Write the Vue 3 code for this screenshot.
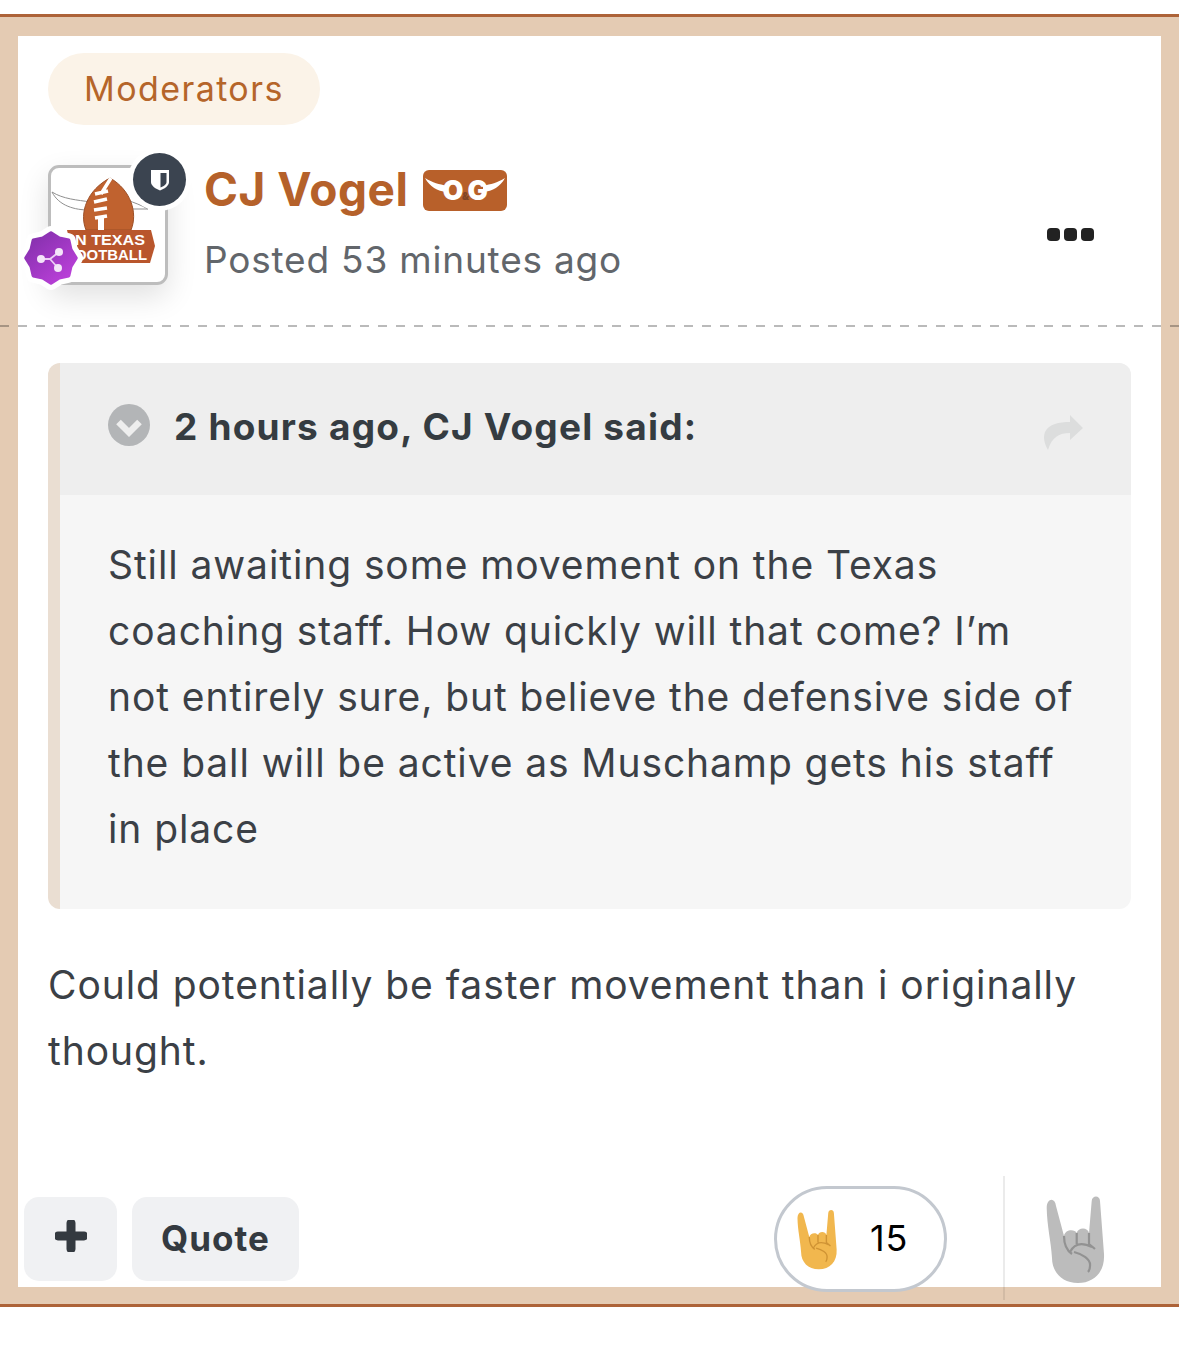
<script setup>
function star(cx, cy, outer, inner, n) {
  const pts = []
  for (let i = 0; i < n * 2; i++) {
    const a = (i * Math.PI) / n - Math.PI / 2
    const r = i % 2 === 0 ? outer : inner
    pts.push(`${(cx + r * Math.cos(a)).toFixed(2)},${(cy + r * Math.sin(a)).toFixed(2)}`)
  }
  return pts.join(' ')
}
const badgePoints = star(27, 27, 25, 21.5, 8)
const handOutline = 'M0.7 12C0.7 2 9 1 10 10L18 40C19 33 29 33 30.7 37C32 31 42 31 43 37L45.7 5C46-1 54-1 54 5L58 58C59 76 48 87 32 87C16 87 6 76 6 62C5 45 1 30 0.7 12Z'
const handLines = 'M18 40C18 48 20 54 26 58M30.7 37V48M43 37V48L49 53M24 56C29 46 38 47 46 51M28 56C36 58 45 63 44 70C44 73 43 75 42 76'
</script>

<template>
  <div class="frame">
    <article class="card">
      <div class="group-pill">Moderators</div>

      <header class="author">
        <div class="avatar-wrap">
          <div class="avatar">
            <svg class="logo" viewBox="0 0 114 114" width="114" height="114">
              <path d="M1 24C12 31 26 32 40 34L38 42C24 42 8 38 1 24Z" fill="#fff" stroke="#8f8f8f" stroke-width="1" />
              <path d="M76 32C84 35 90 37 97 41L76 41Z" fill="#fff" stroke="#8f8f8f" stroke-width="1" />
              <path d="M59 10C80 22 87 45 80 62L35 62C28 45 36 22 59 10Z" fill="#c0622f" stroke="#9c4f27" stroke-width="1" />
              <path d="M60 10L50 26M44 26L57 23M43 34L56 31M43 42L56 40M44 50L56 48" stroke="#fff" stroke-width="3.500" fill="none" />
              <path d="M47 50H53V62H47Z" fill="#fff" />
              <path d="M16 62H100L104 78L99 95H30L22 88Z" fill="#b9562c" />
              <text x="24" y="76.500" textLength="70" lengthAdjust="spacingAndGlyphs" class="logo-text">N TEXAS</text>
              <text x="24" y="92" textLength="72" lengthAdjust="spacingAndGlyphs" class="logo-text">OOTBALL</text>
            </svg>
          </div>
          <span class="shield-badge">
            <svg viewBox="0 0 20 22" width="20" height="22">
              <path d="M1 1H19V13C19 17 14 20 10 21.500C6 20 1 17 1 13Z" fill="#fff" />
              <path d="M10.500 4H16.500V13C16.500 15.500 13.500 17.500 10.500 18.500Z" fill="#3b4450" />
            </svg>
          </span>
          <span class="share-badge">
            <svg viewBox="0 0 54 54" width="54" height="54">
              <defs>
                <linearGradient id="purple" gradientUnits="userSpaceOnUse" x1="8" y1="4" x2="46" y2="50">
                  <stop offset="0" stop-color="#8530ad" />
                  <stop offset="1" stop-color="#bd41db" />
                </linearGradient>
              </defs>
              <polygon :points="badgePoints" fill="#fff" stroke="#fff" stroke-width="14" stroke-linejoin="round" />
              <polygon :points="badgePoints" fill="url(#purple)" stroke="url(#purple)" stroke-width="3.500" stroke-linejoin="round" />
              <path d="M35 21L26 28L17 28M26 28L34 37" stroke="#eccdf5" stroke-width="1.800" fill="none" />
              <circle cx="35" cy="21" r="4" fill="#f4e4f9" />
              <circle cx="17" cy="28" r="4" fill="#f4e4f9" />
              <circle cx="34" cy="37" r="4" fill="#f4e4f9" />
            </svg>
          </span>
        </div>

        <div class="meta">
          <div class="name-row">
            <h3 class="name">CJ Vogel</h3>
            <span class="og-badge">
              <svg class="og-horns" viewBox="0 0 84 41" width="84" height="41">
                <path d="M2 8C10 13 16 14 24 16L24 22C14 21 7 17 2 8Z" fill="#fff" />
                <path d="M82 8C74 13 68 14 60 16L60 22C70 21 77 17 82 8Z" fill="#fff" />
              </svg>
              <span class="og-text">O<small>&amp;</small>G</span>
            </span>
          </div>
          <div class="posted">Posted 53 minutes ago</div>
        </div>

        <div class="more"><i></i><i></i><i></i></div>
      </header>

      <div class="dash"></div>

      <blockquote class="quote">
        <div class="quote-head">
          <svg class="chevron" viewBox="0 0 42 42" width="42" height="42">
            <circle cx="21" cy="21" r="21" fill="#b3b5b7" />
            <path d="M10.500 18L21 28.500L31.500 18" fill="none" stroke="#eeeeee" stroke-width="6.500" />
          </svg>
          <span class="quote-title">2 hours ago, CJ Vogel said:</span>
          <svg class="reply" viewBox="0 0 40 35" width="40" height="35">
            <path d="M27 0L40 13L27 25V18C16 18 9 22 5 35C1 28 0 22 2 17C6 9 16 7 27 7Z" fill="#dcdddd" />
          </svg>
        </div>
        <p class="quote-body">Still awaiting some movement on the Texas coaching staff. How quickly will that come? I’m not entirely sure, but believe the defensive side of the ball will be active as Muschamp gets his staff in place</p>
      </blockquote>

      <p class="post-text">Could potentially be faster movement than i originally thought.</p>

      <footer class="actions">
        <button class="btn btn-plus" type="button">
          <svg viewBox="0 0 32 32" width="32" height="32">
            <path d="M16 3V29M3 16H29" stroke="#343a40" stroke-width="9" stroke-linecap="round" fill="none" />
          </svg>
        </button>
        <button class="btn btn-quote" type="button">Quote</button>

        <div class="reaction">
          <svg class="hand-small" viewBox="0 -1 60 89" width="41" height="61">
            <path :d="handOutline" fill="#f1b74e" />
            <path :d="handLines" fill="none" stroke="#cf9334" stroke-width="2" />
          </svg>
          <span class="count">15</span>
        </div>

        <span class="divider"></span>

        <svg class="hand-large" viewBox="0 -1 60 89" width="60" height="89">
          <path :d="handOutline" fill="#bcbcbc" />
          <path :d="handLines" fill="none" stroke="#929292" stroke-width="2.200" />
        </svg>
      </footer>
    </article>
  </div>
</template>

<style scoped>
.frame {
  margin-top: 14px;
  border-top: 3px solid #ad6338;
  border-bottom: 3px solid #ad6338;
  background: #e4cbb3;
  padding: 19px 18px 17px;
  font-family: Inter, "Noto Sans", sans-serif;
}
.card {
  background: #fff;
  padding: 17px 30px 0;
  height: 1251px;
  box-sizing: border-box;
}
.group-pill {
  display: inline-block;
  height: 72px;
  line-height: 72px;
  padding: 0 36px 0 36px;
  border-radius: 36px;
  background: #fbf3e8;
  color: #b5652a;
  font-size: 34px;
  letter-spacing: 1.420px;
}
.author {
  display: flex;
  align-items: center;
  margin-top: 40px;
}
.avatar-wrap {
  position: relative;
  width: 120px;
  height: 120px;
  flex: none;
}
.avatar {
  width: 120px;
  height: 120px;
  box-sizing: border-box;
  border: 3px solid #bdbdbd;
  border-radius: 11px;
  background: #fff;
  box-shadow: 0 12px 30px rgba(0, 0, 0, 0.12);
  overflow: hidden;
}
.logo {
  display: block;
}
.logo-text {
  font-family: "Liberation Sans", sans-serif;
  font-weight: 700;
  font-size: 14px;
  fill: #fff;
}
.shield-badge {
  position: absolute;
  left: 85px;
  top: -12px;
  width: 53px;
  height: 53px;
  border-radius: 50%;
  background: #3b4450;
  display: flex;
  align-items: center;
  justify-content: center;
  box-shadow: 0 0 0 5px #fff;
}
.share-badge {
  position: absolute;
  left: -24px;
  top: 66px;
  width: 54px;
  height: 54px;
}
.share-badge svg {
  display: block;
  overflow: visible;
}
.meta {
  margin-left: 36px;
}
.name-row {
  display: flex;
  align-items: center;
  height: 50px;
  margin-top: -4px;
}
.name {
  margin: 0;
  font-size: 46px;
  line-height: 50px;
  font-weight: 700;
  letter-spacing: 0.500px;
  color: #b5612a;
}
.og-badge {
  position: relative;
  width: 84px;
  height: 41px;
  margin-left: 14px;
  margin-top: 4px;
  border-radius: 6px;
  background: #b8602a;
  display: flex;
  align-items: center;
  justify-content: center;
}
.og-horns {
  position: absolute;
  inset: 0;
}
.og-text {
  position: relative;
  color: #fff;
  font-size: 27px;
  font-weight: 900;
  letter-spacing: -1.500px;
}
.og-text small {
  font-size: 10px;
  color: #7e4526;
}
.posted {
  margin-top: 23px;
  font-size: 37px;
  line-height: 46px;
  letter-spacing: 0.800px;
  color: #62666b;
}
.more {
  display: flex;
  gap: 4px;
  margin-left: auto;
  margin-right: 37px;
  margin-top: 18px;
}
.more i {
  width: 13px;
  height: 13px;
  border-radius: 4px;
  background: #222;
}
.dash {
  margin: 40px -48px 0;
  height: 2px;
  background: repeating-linear-gradient(90deg, rgba(0, 0, 0, 0.27) 0 9px, transparent 9px 18px);
}
.quote {
  margin: 36px 0 0;
  border-left: 12px solid #eaded2;
  border-radius: 12px;
  background: #f6f6f6;
  overflow: hidden;
}
.quote-head {
  height: 132px;
  background: #eeeeee;
  display: flex;
  align-items: center;
  padding: 0 48px;
  color: #353c41;
}
.chevron {
  margin-top: -8px;
  flex: none;
}
.quote-title {
  margin-left: 24px;
  margin-top: -6px;
  font-size: 37px;
  font-weight: 700;
  letter-spacing: 1.200px;
}
.reply {
  margin-left: auto;
  margin-top: 6px;
}
.quote-body {
  margin: 0;
  padding: 37px 48px 47px;
  font-size: 39px;
  line-height: 66px;
  letter-spacing: 0.900px;
  color: #3b4046;
}
.post-text {
  margin: 43px 0 0;
  font-size: 39px;
  line-height: 66px;
  letter-spacing: 0.920px;
  color: #3b4046;
}
.actions {
  display: flex;
  align-items: flex-start;
  height: 111px;
  margin: 92px -30px 0 -24px;
}
.btn {
  height: 84px;
  margin-top: 21px;
  border: 0;
  border-radius: 15px;
  background: #f0f1f3;
  color: #343a40;
  font-family: inherit;
  display: flex;
  align-items: center;
  justify-content: center;
  padding: 0;
}
.btn-plus {
  width: 93px;
}
.btn-plus svg {
  margin-top: -6px;
}
.btn-quote {
  width: 167px;
  margin-left: 15px;
  padding-bottom: 2px;
  font-size: 35px;
  font-weight: 700;
  letter-spacing: 1px;
}
.reaction {
  margin-left: auto;
  margin-top: 10px;
  width: 173px;
  height: 106px;
  flex: none;
  box-sizing: border-box;
  border: 3px solid #c3c8cf;
  border-radius: 53px;
  background: #fff;
  display: flex;
  align-items: center;
  padding-left: 20px;
}
.hand-small {
  flex: none;
}
.count {
  margin-left: 32px;
  padding-bottom: 2px;
  font-size: 36px;
  letter-spacing: 0.800px;
  color: #000;
  font-family: Inter, sans-serif;
}
.divider {
  width: 2px;
  height: 124px;
  margin-left: 56px;
  background: rgba(0, 0, 0, 0.08);
  flex: none;
}
.hand-large {
  flex: none;
  margin: 19px 55px 0 41px;
}
</style>
